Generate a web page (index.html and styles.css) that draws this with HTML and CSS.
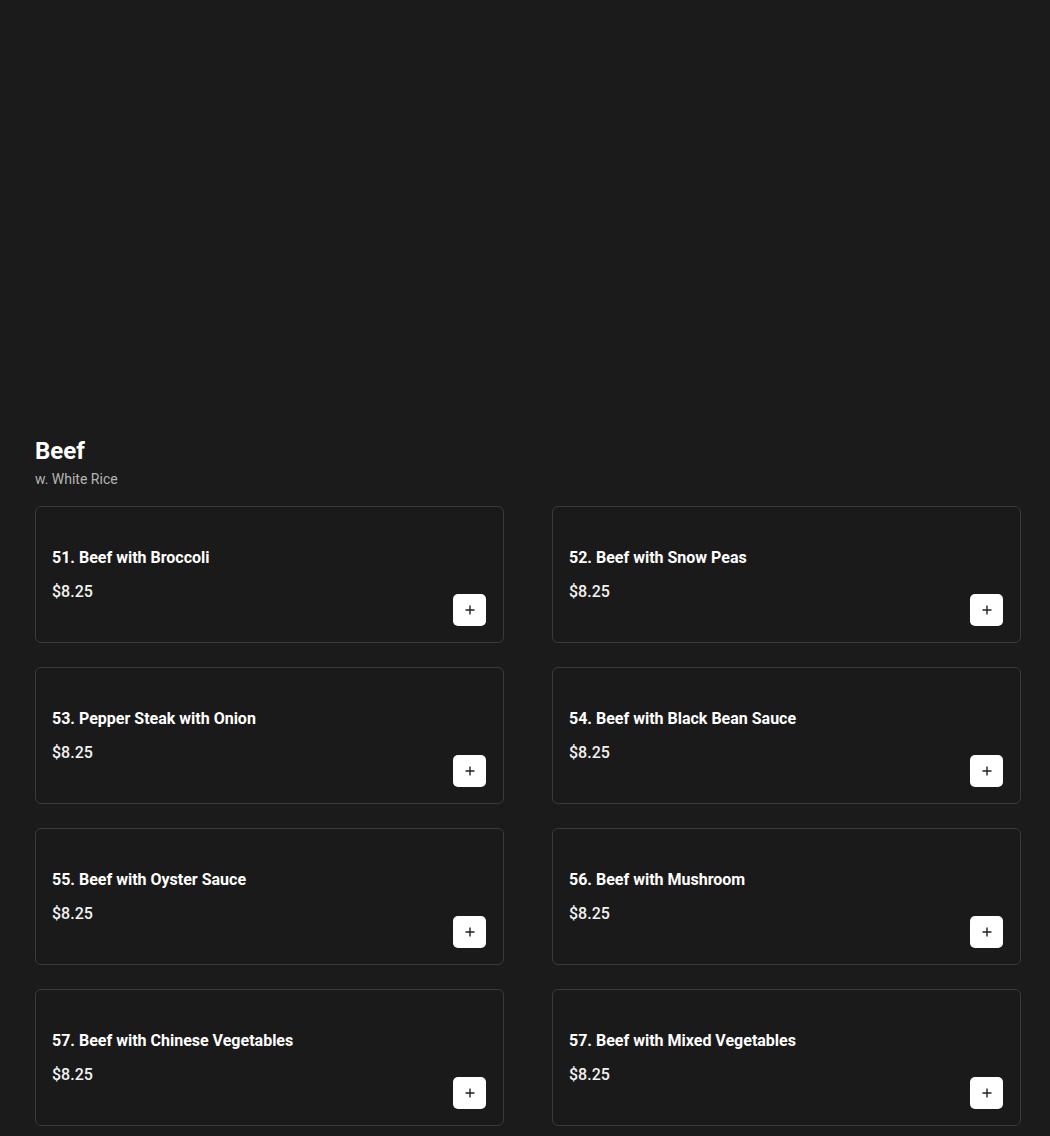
FILE: index.html
```html
<!DOCTYPE html>
<html lang="en">
<head>
<meta charset="utf-8">
<title>Beef</title>
<link rel="stylesheet" href="styles.css">
</head>
<body>
<main class="page">
  <section class="category">
    <header class="category-head">
      <h2 class="category-title">Beef</h2>
      <p class="category-sub">w. White Rice</p>
    </header>
    <div class="grid">
      <article class="card"><div class="info"><h3 class="name">51. Beef with Broccoli</h3><p class="price">$8.25</p></div><button class="add" aria-label="Add"><svg viewBox="0 0 12 12" width="12" height="12"><path d="M6 1.5v9M1.5 6h9" stroke="#222" stroke-width="1.4" fill="none"/></svg></button></article>
      <article class="card"><div class="info"><h3 class="name">52. Beef with Snow Peas</h3><p class="price">$8.25</p></div><button class="add" aria-label="Add"><svg viewBox="0 0 12 12" width="12" height="12"><path d="M6 1.5v9M1.5 6h9" stroke="#222" stroke-width="1.4" fill="none"/></svg></button></article>
      <article class="card"><div class="info"><h3 class="name">53. Pepper Steak with Onion</h3><p class="price">$8.25</p></div><button class="add" aria-label="Add"><svg viewBox="0 0 12 12" width="12" height="12"><path d="M6 1.5v9M1.5 6h9" stroke="#222" stroke-width="1.4" fill="none"/></svg></button></article>
      <article class="card"><div class="info"><h3 class="name">54. Beef with Black Bean Sauce</h3><p class="price">$8.25</p></div><button class="add" aria-label="Add"><svg viewBox="0 0 12 12" width="12" height="12"><path d="M6 1.5v9M1.5 6h9" stroke="#222" stroke-width="1.4" fill="none"/></svg></button></article>
      <article class="card"><div class="info"><h3 class="name">55. Beef with Oyster Sauce</h3><p class="price">$8.25</p></div><button class="add" aria-label="Add"><svg viewBox="0 0 12 12" width="12" height="12"><path d="M6 1.5v9M1.5 6h9" stroke="#222" stroke-width="1.4" fill="none"/></svg></button></article>
      <article class="card"><div class="info"><h3 class="name">56. Beef with Mushroom</h3><p class="price">$8.25</p></div><button class="add" aria-label="Add"><svg viewBox="0 0 12 12" width="12" height="12"><path d="M6 1.5v9M1.5 6h9" stroke="#222" stroke-width="1.4" fill="none"/></svg></button></article>
      <article class="card"><div class="info"><h3 class="name">57. Beef with Chinese Vegetables</h3><p class="price">$8.25</p></div><button class="add" aria-label="Add"><svg viewBox="0 0 12 12" width="12" height="12"><path d="M6 1.5v9M1.5 6h9" stroke="#222" stroke-width="1.4" fill="none"/></svg></button></article>
      <article class="card"><div class="info"><h3 class="name">57. Beef with Mixed Vegetables</h3><p class="price">$8.25</p></div><button class="add" aria-label="Add"><svg viewBox="0 0 12 12" width="12" height="12"><path d="M6 1.5v9M1.5 6h9" stroke="#222" stroke-width="1.4" fill="none"/></svg></button></article>
    </div>
  </section>
</main>
</body>
</html>
```

FILE: styles.css
```css
* { box-sizing: border-box; }
html, body {
  margin: 0;
  padding: 0;
  background: #1b1b1b;
  color: #fff;
  font-family: Roboto, "Liberation Sans", Arial, sans-serif;
}
.page {
  padding: 435px 0 0 35px;
  height: 1136px;
  overflow: hidden;
}
.category { width: 986px; }
.category-head { margin-bottom: 17px; }
.category-title {
  margin: 0;
  font-size: 24px;
  line-height: 32px;
  font-weight: 700;
  color: #fff;
}
.category-sub {
  margin: 2px 0 0;
  font-size: 14px;
  line-height: 20px;
  color: #b5b5b5;
}
.grid {
  display: grid;
  grid-template-columns: 469px 469px;
  column-gap: 48px;
  row-gap: 24px;
}
.card {
  height: 137px;
  border: 1px solid #3b3b3b;
  border-radius: 6px;
  background: #1a1a1a;
  padding: 16px;
  display: flex;
  justify-content: space-between;
  align-items: flex-end;
}
.info { align-self: flex-start; padding-top: 23px; }
.name {
  margin: 0;
  font-size: 16px;
  line-height: 24px;
  font-weight: 700;
  color: #fff;
}
.price {
  margin: 10px 0 0;
  font-size: 16px;
  line-height: 24px;
  font-weight: 500;
  color: #f2f2f2;
}
.add {
  width: 33px;
  height: 32px;
  padding: 0;
  border: none;
  border-radius: 5px;
  background: #fff;
  display: flex;
  align-items: center;
  justify-content: center;
  margin: 0 1px 0 0;
}
.add svg { display: block; }
```
